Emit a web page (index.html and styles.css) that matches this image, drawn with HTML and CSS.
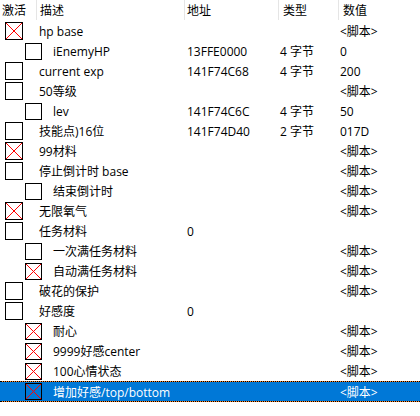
FILE: index.html
```html
<!DOCTYPE html>
<html>
<head>
<meta charset="utf-8">
<link rel="stylesheet" href="styles.css">
</head>
<body>
<div class="list">
  <div class="header">
    <div class="h c-active">激活</div>
    <div class="h c-desc">描述</div>
    <div class="h c-addr">地址</div>
    <div class="h c-type">类型</div>
    <div class="h c-val">数值</div>
  </div>

  <div class="row"><div class="tree l0"><span class="cb x"></span><span class="txt">hp base</span></div><div class="c-addr"></div><div class="c-type"></div><div class="c-val">&lt;脚本&gt;</div></div>
  <div class="row"><div class="tree l1"><span class="cb"></span><span class="txt">iEnemyHP</span></div><div class="c-addr">13FFE0000</div><div class="c-type">4 字节</div><div class="c-val">0</div></div>
  <div class="row"><div class="tree l0"><span class="cb"></span><span class="txt">current exp</span></div><div class="c-addr">141F74C68</div><div class="c-type">4 字节</div><div class="c-val">200</div></div>
  <div class="row"><div class="tree l0"><span class="cb"></span><span class="txt">50等级</span></div><div class="c-addr"></div><div class="c-type"></div><div class="c-val">&lt;脚本&gt;</div></div>
  <div class="row"><div class="tree l1"><span class="cb"></span><span class="txt">lev</span></div><div class="c-addr">141F74C6C</div><div class="c-type">4 字节</div><div class="c-val">50</div></div>
  <div class="row"><div class="tree l0"><span class="cb"></span><span class="txt">技能点)16位</span></div><div class="c-addr">141F74D40</div><div class="c-type">2 字节</div><div class="c-val">017D</div></div>
  <div class="row"><div class="tree l0"><span class="cb x"></span><span class="txt">99材料</span></div><div class="c-addr"></div><div class="c-type"></div><div class="c-val">&lt;脚本&gt;</div></div>
  <div class="row"><div class="tree l0"><span class="cb"></span><span class="txt">停止倒计时 base</span></div><div class="c-addr"></div><div class="c-type"></div><div class="c-val">&lt;脚本&gt;</div></div>
  <div class="row"><div class="tree l1"><span class="cb"></span><span class="txt">结束倒计时</span></div><div class="c-addr"></div><div class="c-type"></div><div class="c-val">&lt;脚本&gt;</div></div>
  <div class="row"><div class="tree l0"><span class="cb x"></span><span class="txt">无限氧气</span></div><div class="c-addr"></div><div class="c-type"></div><div class="c-val">&lt;脚本&gt;</div></div>
  <div class="row"><div class="tree l0"><span class="cb"></span><span class="txt">任务材料</span></div><div class="c-addr">0</div><div class="c-type"></div><div class="c-val"></div></div>
  <div class="row"><div class="tree l1"><span class="cb"></span><span class="txt">一次满任务材料</span></div><div class="c-addr"></div><div class="c-type"></div><div class="c-val">&lt;脚本&gt;</div></div>
  <div class="row"><div class="tree l1"><span class="cb x"></span><span class="txt">自动满任务材料</span></div><div class="c-addr"></div><div class="c-type"></div><div class="c-val">&lt;脚本&gt;</div></div>
  <div class="row"><div class="tree l0"><span class="cb"></span><span class="txt">破花的保护</span></div><div class="c-addr"></div><div class="c-type"></div><div class="c-val">&lt;脚本&gt;</div></div>
  <div class="row"><div class="tree l0"><span class="cb"></span><span class="txt">好感度</span></div><div class="c-addr">0</div><div class="c-type"></div><div class="c-val"></div></div>
  <div class="row"><div class="tree l1"><span class="cb x"></span><span class="txt">耐心</span></div><div class="c-addr"></div><div class="c-type"></div><div class="c-val">&lt;脚本&gt;</div></div>
  <div class="row"><div class="tree l1"><span class="cb x"></span><span class="txt">9999好感center</span></div><div class="c-addr"></div><div class="c-type"></div><div class="c-val">&lt;脚本&gt;</div></div>
  <div class="row"><div class="tree l1"><span class="cb x"></span><span class="txt">100心情状态</span></div><div class="c-addr"></div><div class="c-type"></div><div class="c-val">&lt;脚本&gt;</div></div>
  <div class="row sel"><div class="sel-in"><div class="tree l1"><span class="cb x"></span><span class="txt">增加好感/top/bottom</span></div><div class="c-addr"></div><div class="c-type"></div><div class="c-val">&lt;脚本&gt;</div></div></div>
</div>
</body>
</html>
```
FILE: styles.css
```css
html, body {
  margin: 0;
  padding: 0;
  background: #fff;
}
body {
  width: 420px;
  height: 416px;
  overflow: hidden;
  font-family: "Open Sans", "Noto Sans CJK SC", sans-serif;
  font-size: 12px;
  color: #000;
}
.list {
  display: flex;
  flex-direction: column;
}
.header {
  display: flex;
  height: 21px;
  align-items: stretch;
}
.h {
  display: flex;
  align-items: center;
  box-sizing: border-box;
  padding-left: 3px;
  border-right: 1px solid #e5e5e5;
  height: 20px;
}
.header .c-active { width: 37px; padding-left: 2px; }
.header .c-desc { width: 148px; }
.header .c-addr { width: 94px; }
.header .c-type { width: 60px; padding-left: 4px; }
.header .c-val { flex: 1; border-right: none; padding-left: 4px; }

.row {
  display: flex;
  height: 20px;
  align-items: center;
  white-space: nowrap;
}
.row > div, .sel-in > div {
  box-sizing: border-box;
}
.tree {
  width: 185px;
  display: flex;
  align-items: center;
}
.cb {
  display: block;
  box-sizing: border-box;
  width: 18px;
  height: 18px;
  border: 1px solid #000;
  background: #fff;
  flex: none;
}
.cb.x {
  background:
    linear-gradient(to top right, transparent calc(50% - 0.6px), #ff0000 calc(50% - 0.6px), #ff0000 calc(50% + 0.6px), transparent calc(50% + 0.6px)),
    linear-gradient(to bottom right, transparent calc(50% - 0.6px), #ff0000 calc(50% - 0.6px), #ff0000 calc(50% + 0.6px), transparent calc(50% + 0.6px)),
    #fff;
}
.sel .cb.x {
  background:
    linear-gradient(to top right, transparent calc(50% - 0.6px), #ff0000 calc(50% - 0.6px), #ff0000 calc(50% + 0.6px), transparent calc(50% + 0.6px)),
    linear-gradient(to bottom right, transparent calc(50% - 0.6px), #ff0000 calc(50% - 0.6px), #ff0000 calc(50% + 0.6px), transparent calc(50% + 0.6px));
}
.l0 .cb { margin-left: 5px; }
.l0 .txt { margin-left: 16px; }
.l1 .cb { margin-left: 25px; width: 17px; height: 17px; }
.l1 .txt { margin-left: 11px; }

.c-addr { width: 94px; padding-left: 2px; }
.c-type { width: 60px; padding-left: 1px; }
.c-val { flex: 1; padding-left: 1px; }

.sel {
  box-sizing: border-box;
  border-top: 1px dotted #000;
  border-bottom: 1px dotted #000;
  background: #ff8728;
  height: 21px;
}
.sel-in {
  display: flex;
  align-items: center;
  width: 100%;
  height: 19px;
  background: #0078d7;
  color: #fff;
}
```
